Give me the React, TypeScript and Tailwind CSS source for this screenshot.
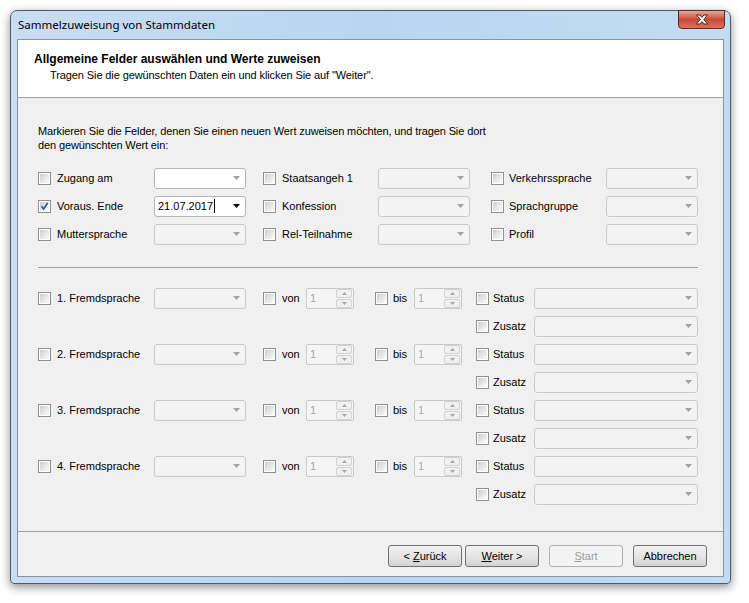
import React from "react";

const FONT = { fontFamily: '"Liberation Sans", Arial, sans-serif' };

function Check({ checked = false }: { checked?: boolean }) {
  return (
    <span className="w-[13px] h-[13px] shrink-0 border border-[#8e8f8f] bg-white p-px flex">
      <span className="flex-1 bg-gradient-to-br from-[#c9ccd1] via-[#e6e6e6] to-[#fafafa] flex items-center justify-center">
        {checked && (
          <svg width="9" height="9" viewBox="0 0 9 9">
            <path d="M1.5 4.2 L3.6 7 L7.6 1" fill="none" stroke="#3e5690" strokeWidth="1.7" />
          </svg>
        )}
      </span>
    </span>
  );
}

function Arrow({ color }: { color: string }) {
  return (
    <svg width="7" height="4" viewBox="0 0 7 4" className="shrink-0">
      <polygon points="0,0 7,0 3.5,4" fill={color} />
    </svg>
  );
}

function Combo({
  width,
  enabled = false,
  value,
  dark = false,
}: {
  width: string;
  enabled?: boolean;
  value?: string;
  dark?: boolean;
}) {
  return (
    <div
      className={`${width} h-[21px] shrink-0 rounded-[3px] border flex items-center justify-between pl-[3px] pr-[5px] ${
        enabled ? "bg-white border-[#b4b6bb]" : "bg-[#f3f3f3] border-[#cacaca]"
      }`}
    >
      <span className="text-[11px] text-black leading-none flex items-center">
        {value}
        {value && <span className="w-px h-[14px] bg-black ml-px" />}
      </span>
      <Arrow color={dark ? "#000" : "#a2a2a2"} />
    </div>
  );
}

function Spinner() {
  return (
    <div className="w-[48px] h-[21px] shrink-0 rounded-[2px] border border-[#cacaca] bg-[#f5f5f5] flex items-center justify-between pl-[3px] pr-px">
      <span className="text-[11px] text-[#a8a8a8]">1</span>
      <div className="w-[16px] h-[19px] flex flex-col gap-px">
        <div className="flex-1 rounded-[2px] border border-[#d2d2d2] bg-[#f0f0f0] flex items-center justify-center">
          <svg width="5" height="3" viewBox="0 0 5 3">
            <polygon points="0,3 5,3 2.5,0" fill="#a8a8a8" />
          </svg>
        </div>
        <div className="flex-1 rounded-[2px] border border-[#d2d2d2] bg-[#f0f0f0] flex items-center justify-center">
          <svg width="5" height="3" viewBox="0 0 5 3">
            <polygon points="0,0 5,0 2.5,3" fill="#a8a8a8" />
          </svg>
        </div>
      </div>
    </div>
  );
}

function Field({
  width,
  label,
  gap,
  checked,
}: {
  width: string;
  label: string;
  gap: string;
  checked?: boolean;
}) {
  return (
    <div className={`${width} shrink-0 flex items-center ${gap}`}>
      <Check checked={checked} />
      <span className="text-[11px] text-black whitespace-nowrap">{label}</span>
    </div>
  );
}

function WinButton({
  children,
  disabled = false,
}: {
  children: React.ReactNode;
  disabled?: boolean;
}) {
  return (
    <button
      className={`w-[74px] h-[22px] rounded-[3px] border text-[11px] leading-none ${
        disabled
          ? "border-[#adb2b5] bg-[#f4f4f4] text-[#9a9a9a]"
          : "border-[#707070] bg-gradient-to-b from-[#f2f2f2] via-[#e6e6e6] to-[#d2d2d2] text-black"
      }`}
    >
      {children}
    </button>
  );
}

const TOP_ROWS = [
  ["Zugang am", "Staatsangeh 1", "Verkehrssprache"],
  ["Voraus. Ende", "Konfession", "Sprachgruppe"],
  ["Muttersprache", "Rel-Teilnahme", "Profil"],
];

export default function App() {
  return (
    <div className="min-h-screen bg-white pt-[10px] pl-[10px]" style={FONT}>
      <div className="w-[721px] h-[574px] rounded-t-[7px] rounded-b-[4px] border border-[#4c5b6c] bg-gradient-to-r from-[#c9ddf2] via-[#b9d5f2] to-[#c4dbf2] shadow-[0_3px_10px_rgba(0,0,0,0.45)] flex flex-col">
        {/* title bar */}
        <div className="h-[28px] flex justify-between pl-[7px] pr-[5px]">
          <span
            className="text-[11.5px] text-black self-center"
            style={{ fontFamily: '"Noto Sans", "Open Sans", sans-serif' }}
          >
            Sammelzuweisung von Stammdaten
          </span>
          <div className="w-[47px] h-[19px] -mt-px rounded-b-[4px] border border-[#5a2a22] bg-gradient-to-b from-[#e8a898] via-[#c9463a] to-[#d9735c] flex items-center justify-center">
            <svg width="14" height="11" viewBox="0 0 14 11">
              <path
                d="M1.5 1 H5 L7 3.4 L9 1 H12.5 L8.8 5.5 L12.5 10 H9 L7 7.6 L5 10 H1.5 L5.2 5.5 Z"
                fill="#fff"
                stroke="#4a2622"
                strokeWidth="1"
                strokeLinejoin="round"
              />
            </svg>
          </div>
        </div>

        {/* client */}
        <div className="mx-[6px] h-[538px] border border-[#8396ab] bg-[#f0f0f0] flex flex-col">
          <div className="h-[58px] shrink-0 bg-white border-b border-[#a0a0a0] pl-[16px] pt-[12px]">
            <div className="text-[12px] font-bold leading-[14px] text-black">
              Allgemeine Felder auswählen und Werte zuweisen
            </div>
            <div className="text-[11px] leading-[14px] text-black mt-[2px] pl-[16px] tracking-[-0.1px]">
              Tragen Sie die gewünschten Daten ein und klicken Sie auf "Weiter".
            </div>
          </div>

          <div className="flex-1 border-b border-[#a0a0a0] pl-[20px] pt-[26px]">
            <p className="text-[11px] leading-[14px] text-black whitespace-nowrap tracking-[-0.12px]">
              Markieren Sie die Felder, denen Sie einen neuen Wert zuweisen möchten, und tragen Sie dort
              <br />
              den gewünschten Wert ein:
            </p>

            <div className="mt-[12px]">
              {TOP_ROWS.map((row, i) => (
                <div key={row[0]} className="h-[28px] flex items-center">
                  <Field width="w-[116px]" label={row[0]} gap="gap-[6px]" checked={i === 1} />
                  <Combo
                    width="w-[92px]"
                    enabled={i < 2}
                    value={i === 1 ? "21.07.2017" : undefined}
                    dark={i === 1}
                  />
                  <div className="w-[17px]" />
                  <Field width="w-[115px]" label={row[1]} gap="gap-[6px]" />
                  <Combo width="w-[92px]" />
                  <div className="w-[21px]" />
                  <Field width="w-[115px]" label={row[2]} gap="gap-[5px]" />
                  <Combo width="w-[92px]" />
                </div>
              ))}
            </div>

            <div className="mt-[19px] w-[660px] h-px bg-[#a0a0a0]" />

            <div className="mt-[16px]">
              {[1, 2, 3, 4].map((n) => (
                <div key={n}>
                  <div className="h-[28px] flex items-center">
                    <Field width="w-[116px]" label={`${n}. Fremdsprache`} gap="gap-[6px]" />
                    <Combo width="w-[92px]" />
                    <div className="w-[17px]" />
                    <Field width="w-[43px]" label="von" gap="gap-[6px]" />
                    <Spinner />
                    <div className="w-[21px]" />
                    <Field width="w-[39px]" label="bis" gap="gap-[5px]" />
                    <Spinner />
                    <div className="w-[14px]" />
                    <Field width="w-[58px]" label="Status" gap="gap-[4px]" />
                    <Combo width="w-[164px]" />
                  </div>
                  <div className="h-[28px] flex items-center pl-[438px]">
                    <Field width="w-[58px]" label="Zusatz" gap="gap-[4px]" />
                    <Combo width="w-[164px]" />
                  </div>
                </div>
              ))}
            </div>
          </div>

          <div className="h-[44px] shrink-0 flex justify-end items-start pt-[13px] pr-[16px]">
            <div className="flex gap-[3px]">
              <WinButton>
                &lt; <span className="underline">Z</span>urück
              </WinButton>
              <WinButton>
                <span className="underline">W</span>eiter &gt;
              </WinButton>
            </div>
            <div className="ml-[10px] flex gap-[10px]">
              <WinButton disabled>
                <span className="underline">S</span>tart
              </WinButton>
              <WinButton>Abbrechen</WinButton>
            </div>
          </div>
        </div>
      </div>
    </div>
  );
}
